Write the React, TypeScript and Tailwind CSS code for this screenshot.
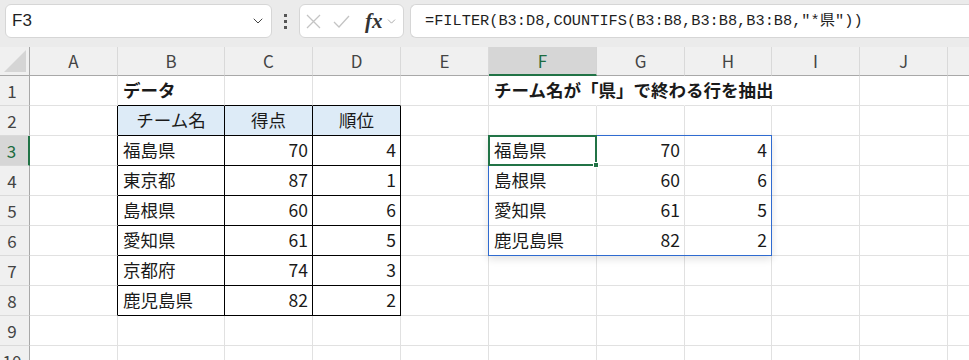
import { ChevronDown } from "lucide-react";
import clsx from "clsx";

type Cell = {
  text?: string;
  right?: boolean;
  center?: boolean;
  bold?: boolean;
  fill?: boolean;
  blackR?: boolean;
  blackB?: boolean;
  noR?: boolean;
};

const cols = [
  { key: "A", w: "w-[88px]" },
  { key: "B", w: "w-[107px]" },
  { key: "C", w: "w-[88px]" },
  { key: "D", w: "w-[88px]" },
  { key: "E", w: "w-[88px]" },
  { key: "F", w: "w-[108px]" },
  { key: "G", w: "w-[88px]" },
  { key: "H", w: "w-[87px]" },
  { key: "I", w: "w-[88px]" },
  { key: "J", w: "w-[88px]" },
  { key: "K", w: "w-[88px]" },
];

const source = [
  ["福島県", "70", "4"],
  ["東京都", "87", "1"],
  ["島根県", "60", "6"],
  ["愛知県", "61", "5"],
  ["京都府", "74", "3"],
  ["鹿児島県", "82", "2"],
];

const result = [
  ["福島県", "70", "4"],
  ["島根県", "60", "6"],
  ["愛知県", "61", "5"],
  ["鹿児島県", "82", "2"],
];

function buildRows(): Record<string, Cell>[] {
  const rows: Record<string, Cell>[] = [];
  for (let i = 0; i < 10; i++) rows.push({});

  // row 1 titles
  rows[0].B = { text: "データ", bold: true, blackB: true };
  rows[0].C = { blackB: true };
  rows[0].D = { blackB: true };
  rows[0].F = { text: "チーム名が「県」で終わる行を抽出", bold: true, noR: true };
  rows[0].G = { noR: true };
  rows[0].H = { noR: true };

  // source table header
  rows[1].A = { blackR: true };
  rows[1].B = { text: "チーム名", center: true, fill: true, blackR: true, blackB: true };
  rows[1].C = { text: "得点", center: true, fill: true, blackR: true, blackB: true };
  rows[1].D = { text: "順位", center: true, fill: true, blackR: true, blackB: true };

  source.forEach((r, i) => {
    const row = rows[i + 2];
    row.A = { blackR: true };
    row.B = { text: r[0], blackR: true, blackB: true };
    row.C = { text: r[1], right: true, blackR: true, blackB: true };
    row.D = { text: r[2], right: true, blackR: true, blackB: true };
  });

  result.forEach((r, i) => {
    const row = rows[i + 2];
    row.F = { text: r[0] };
    row.G = { text: r[1], right: true };
    row.H = { text: r[2], right: true };
  });

  return rows;
}

function FormulaBar() {
  return (
    <div className="flex h-[47px] items-start gap-0 bg-[#ebebeb] pt-1 pl-[5px]">
      {/* Name box */}
      <div className="flex h-[34px] w-[267px] items-center justify-between rounded-md border border-[#d6d6d6] bg-white pl-[6px] pr-[5px]">
        <span className="font-['Liberation_Sans',sans-serif] text-[17px] text-[#1f1f1f]">F3</span>
        <ChevronDown className="size-4 text-[#444]" strokeWidth={1.5} />
      </div>

      {/* Dots */}
      <div className="flex h-[34px] w-[27px] flex-col items-center justify-center gap-[3px]">
        <div className="size-[3px] bg-[#555]" />
        <div className="size-[3px] bg-[#555]" />
        <div className="size-[3px] bg-[#555]" />
      </div>

      {/* Cancel / Enter / fx */}
      <div className="flex h-[34px] w-[105px] items-center rounded-md border border-[#d6d6d6] bg-white pl-[6px]">
        <svg width="15" height="15" viewBox="0 0 15 15" className="text-[#c4c4c4]">
          <path d="M1 1 L14 14 M14 1 L1 14" stroke="currentColor" strokeWidth="1.3" fill="none" />
        </svg>
        <svg width="17" height="13" viewBox="0 0 17 13" className="ml-[12px] text-[#c4c4c4]">
          <path d="M1 7 L6 12 L16 1" stroke="currentColor" strokeWidth="1.3" fill="none" />
        </svg>
        <span className="ml-[15px] font-['Liberation_Serif',serif] text-[21px] font-bold italic leading-none text-[#333]">
          fx
        </span>
        <ChevronDown className="ml-[2px] size-[13px] text-[#999]" strokeWidth={1.5} />
      </div>

      {/* Formula */}
      <div className="ml-[6px] flex h-[34px] flex-1 items-center rounded-l-md border border-r-0 border-[#d6d6d6] bg-white pl-[14px]">
        <span className="whitespace-nowrap font-['Liberation_Mono','Noto_Sans_CJK_JP',monospace] text-[15.3px] text-[#1f1f1f]">
          =FILTER(B3:D8,COUNTIFS(B3:B8,B3:B8,B3:B8,"*県"))
        </span>
      </div>
    </div>
  );
}

function ColumnHeader() {
  return (
    <div className="flex h-[29px] bg-[#f0f0f0]">
      {/* Select-all corner */}
      <div className="flex w-[30px] shrink-0 items-end justify-end border-r border-b border-[#a8a8a8] p-[3px]">
        <svg width="22" height="22" viewBox="0 0 22 22">
          <polygon points="22,0 22,22 0,22" fill="#d5d5d5" />
        </svg>
      </div>
      {cols.map((c) => {
        const sel = c.key === "F";
        return (
          <div
            key={c.key}
            className={clsx(
              c.w,
              "flex shrink-0 items-center justify-center border-r text-[17px]",
              sel
                ? "border-b-2 border-r-[#d4d4d4] border-b-[#217346] bg-[#d6d6d6] text-[#1d6b40]"
                : "border-b border-r-[#d9d9d9] border-b-[#a8a8a8] text-[#444]"
            )}
          >
            {c.key}
          </div>
        );
      })}
    </div>
  );
}

export default function App() {
  const rows = buildRows();

  return (
    <div className="h-[360px] w-[969px] overflow-hidden bg-white font-['Noto_Sans_CJK_JP',sans-serif]">
      <FormulaBar />

      <div className="relative">
        <ColumnHeader />

        {rows.map((row, i) => {
          const n = i + 1;
          const sel = n === 3;
          return (
            <div key={n} className="flex h-[30px]">
              <div
                className={clsx(
                  "flex w-[30px] shrink-0 items-center justify-center border-b border-b-[#dadada] pr-[5px] text-[17px]",
                  sel
                    ? "border-r-2 border-r-[#217346] bg-[#d6d6d6] text-[#1d6b40]"
                    : "border-r border-r-[#a8a8a8] bg-[#f0f0f0] text-[#444]"
                )}
              >
                {n}
              </div>
              {cols.map((c) => {
                const cell = row[c.key] ?? {};
                return (
                  <div
                    key={c.key}
                    className={clsx(
                      c.w,
                      "flex shrink-0 items-center border-r border-b px-[5px] text-[17.5px] whitespace-nowrap text-[#1a1a1a]",
                      cell.blackR ? "border-r-black" : cell.noR ? "border-r-transparent" : "border-r-[#e1e1e1]",
                      cell.blackB ? "border-b-black" : "border-b-[#e1e1e1]",
                      cell.fill && "bg-[#ddebf7]",
                      cell.right && "justify-end pr-[4px]",
                      cell.center && "justify-center",
                      cell.bold && "relative z-10 overflow-visible font-bold"
                    )}
                  >
                    {cell.text}
                  </div>
                );
              })}
            </div>
          );
        })}

        {/* Spill range border */}
        <div className="absolute top-[88px] left-[488px] h-[121px] w-[284px] border border-[#2f6bd0] shadow-[0_3px_8px_rgba(0,0,0,0.12)]" />

        {/* Active cell */}
        <div className="absolute top-[88px] left-[488px] h-[31px] w-[109px] border-2 border-[#217346]">
          <div className="absolute -right-[4px] -bottom-[4px] size-[6px] border border-white bg-[#217346]" />
        </div>
      </div>
    </div>
  );
}
